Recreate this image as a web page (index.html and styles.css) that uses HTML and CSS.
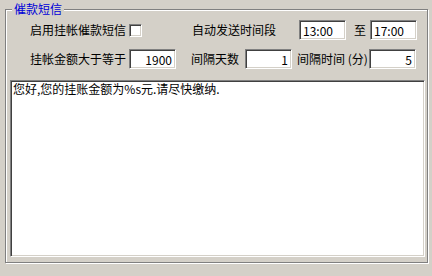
FILE: index.html
```html
<!DOCTYPE html>
<html>
<head>
  <title>催款短信</title>
<link rel="stylesheet" href="styles.css">
</head>
<body>

<div class="grupo">
  <span class="titulo">催款短信</span>

  <div class="fila">
    <span class="etiqueta ancho1">启用挂帐催款短信</span>
    <span class="casilla"></span>
    <span class="etiqueta ancho2">自动发送时间段</span>
    <input class="caja hora" type="text" value="13:00">
    <span class="etiqueta hasta">至</span>
    <input class="caja hora" type="text" value="17:00">
  </div>

  <div class="fila">
    <span class="etiqueta ancho1">挂帐金额大于等于</span>
    <input class="caja numero" type="text" value="1900">
    <span class="etiqueta ancho3">间隔天数</span>
    <input class="caja numero" type="text" value="1">
    <span class="etiqueta ancho4">间隔时间 (分)</span>
    <input class="caja numero" type="text" value="5">
  </div>

  <textarea class="mensaje">您好,您的挂账金额为%s元.请尽快缴纳.</textarea>
</div>

</body>
</html>
```

FILE: styles.css
```css
body, html {
  margin: 0;
  height: 100%;
  background-color: #d4d0c8;
  font-family: "Noto Sans CJK SC", "Liberation Sans", sans-serif;
  font-size: 12px;
  color: #000;
}

.grupo {
  position: relative;
  box-sizing: border-box;
  width: 423px;
  height: 254px;
  margin: 9px 0 0 5px;
  padding: 10px 0 0 0;
  border: 1px solid #808080;
  box-shadow: inset 1px 1px 0 #fff, 1px 1px 0 #fff;
}

.titulo {
  position: absolute;
  top: -8px;
  left: 6px;
  padding: 0 2px;
  line-height: 14px;
  background-color: #d4d0c8;
  color: #0000d8;
}

.fila {
  display: flex;
  align-items: center;
  height: 20px;
  padding-left: 24px;
  margin-bottom: 9px;
}

.etiqueta {
  line-height: 14px;
  white-space: nowrap;
}

.ancho1 { width: 99px; }
.ancho2 { width: 107px; margin-left: 50px; }
.ancho3 { width: 54px; margin-left: 15px; }
.ancho4 { width: 72px; margin-left: 5px; }
.hasta { width: 16px; padding-left: 8px; }

.casilla {
  box-sizing: border-box;
  width: 13px;
  height: 13px;
  background-color: #fff;
  border: 1px solid;
  border-color: #808080 #fff #fff #808080;
  box-shadow: inset 1px 1px 0 #404040, inset -1px -1px 0 #d4d0c8;
}

.caja {
  box-sizing: border-box;
  width: 47px;
  height: 20px;
  margin: 0;
  padding: 0 3px;
  font-family: "Noto Sans CJK SC", "Liberation Sans", sans-serif;
  font-size: 12px;
  color: #000;
  background-color: #fff;
  border: 1px solid;
  border-color: #808080 #fff #fff #808080;
  box-shadow: inset 1px 1px 0 #404040, inset -1px -1px 0 #d4d0c8;
  outline: none;
}

.hora { text-align: left; }
.numero { text-align: right; }

.mensaje {
  display: block;
  box-sizing: border-box;
  width: 415px;
  height: 177px;
  margin: 11px 0 0 4px;
  padding: 1px 2px;
  resize: none;
  font-family: "Noto Sans CJK SC", "Liberation Sans", sans-serif;
  font-size: 12px;
  line-height: 14px;
  color: #000;
  background-color: #fff;
  border: 1px solid;
  border-color: #808080 #fff #fff #808080;
  box-shadow: inset 1px 1px 0 #404040, inset -1px -1px 0 #d4d0c8;
  outline: none;
}
```
